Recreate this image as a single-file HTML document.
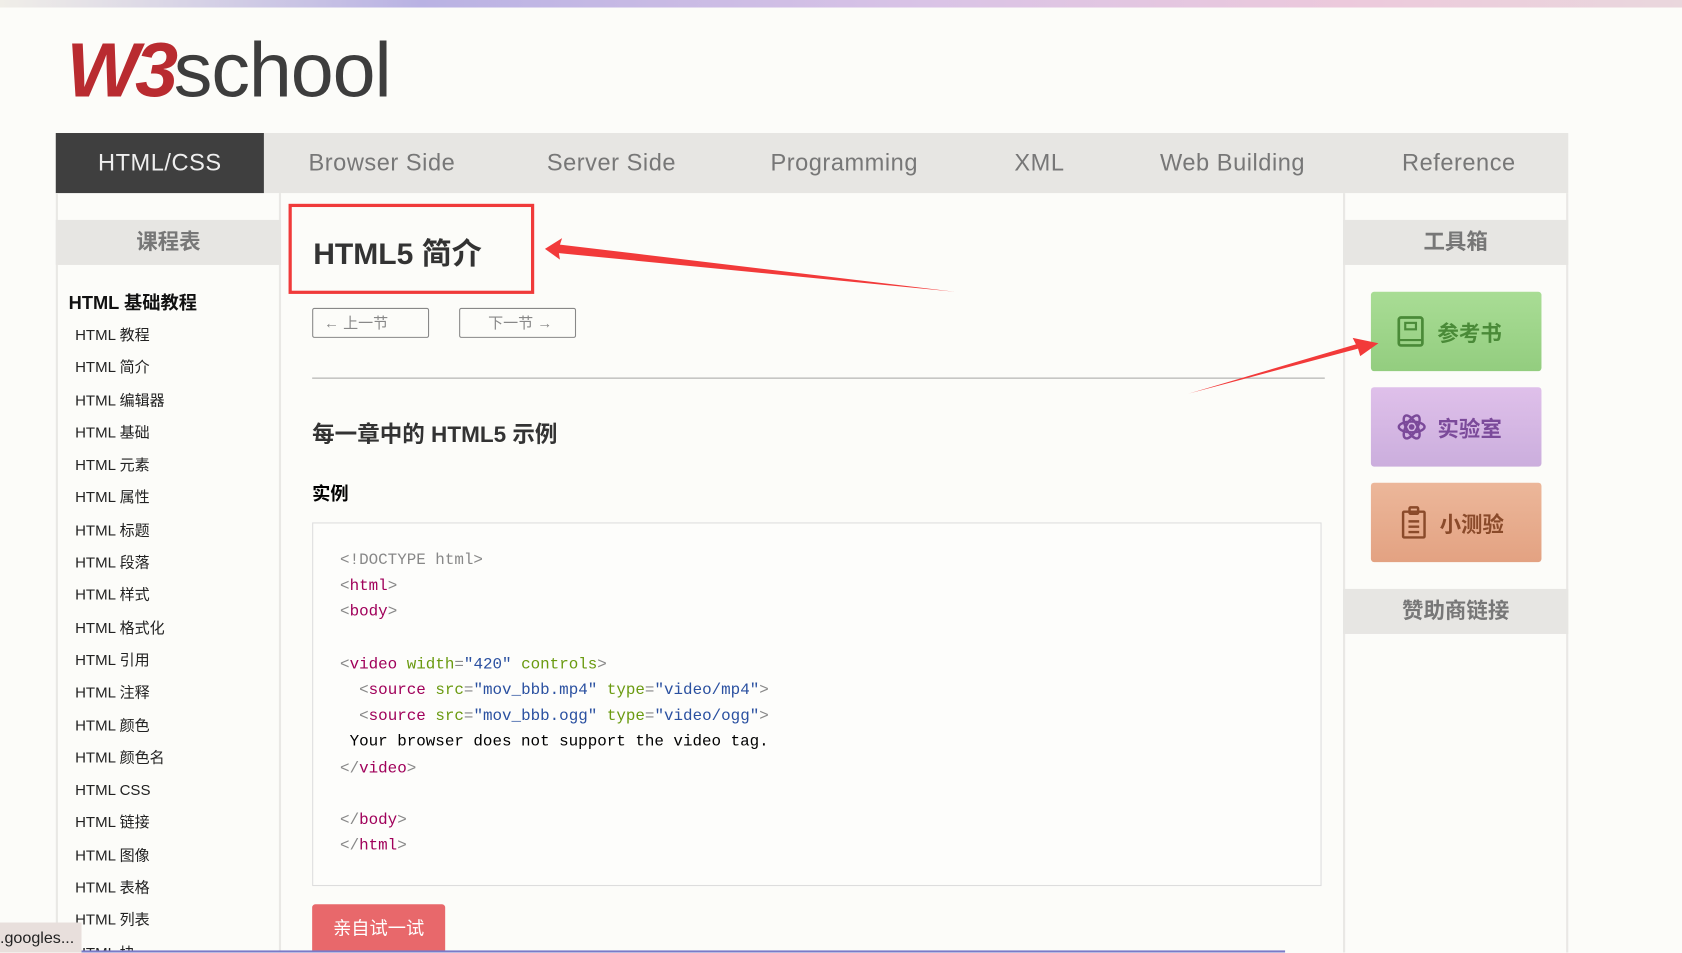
<!DOCTYPE html>
<html><head><meta charset="utf-8"><style>
*{margin:0;padding:0;box-sizing:border-box}
html,body{width:1682px;height:953px;overflow:hidden;background:#fcfcf9}
#w{position:absolute;left:0;top:0;width:1568px;height:888px;overflow:hidden;transform:scale(1.07270);transform-origin:0 0;font-family:"Liberation Sans","Noto Sans CJK SC",sans-serif;color:#333}
.a{position:absolute}
.top{left:0;top:0;width:1568px;height:7px;background:linear-gradient(90deg,#f0eee8,#b9b2e3 25%,#d9c3e6 55%,#ecc9dc 80%,#ead7dd)}
.nav{left:52px;top:124px;width:1410px;height:56px;background:#e7e6e3}
.nav span{position:absolute;top:0;line-height:56px;font-size:22px;color:#777;transform:translateX(-50%);white-space:nowrap;letter-spacing:.5px}
.act{left:52px;top:124px;width:194px;height:56px;background:#3f3f3f;color:#eee;font-size:22px;line-height:56px;text-align:center;letter-spacing:.5px}
.side{border-left:2px solid #e9e8e5;border-right:2px solid #e9e8e5}
.hd{background:#e7e6e3;color:#777;font-size:20px;text-align:center;font-weight:bold}
.li{left:70px;font-size:14px;color:#222}
.code{font-family:"Liberation Mono","DejaVu Sans Mono",monospace;font-size:14.8px;line-height:24.2px;white-space:pre;color:#000}
.g{color:#888}.t{color:#a0005a}.n{color:#6a9a10}.v{color:#2a50a0}
.btn{border-radius:3px;color:#555;font-size:20px;font-weight:bold;display:flex;align-items:center;padding-left:24px}
</style></head><body><div id="w">
<div class="a top"></div>
<div class="a" style="left:62px;top:26px;font-size:72px;font-weight:bold;letter-spacing:-4px;line-height:80px;font-family:'Liberation Sans',sans-serif"><span style="color:#b92b30;font-style:italic">W3</span><span style="color:#3d3d3d;font-weight:normal;letter-spacing:-1px">school</span></div>
<div class="a nav">
<span style="left:304px">Browser Side</span><span style="left:518px">Server Side</span><span style="left:735px">Programming</span><span style="left:917px">XML</span><span style="left:1097px">Web Building</span><span style="left:1308px">Reference</span></div>
<div class="a act">HTML/CSS</div>

<div class="a side" style="left:52px;top:180px;width:210px;height:708px"></div>
<div class="a hd" style="left:52px;top:205px;width:210px;height:42px;line-height:42px">课程表</div>
<div class="a" style="left:64px;top:268px;font-size:17px;font-weight:bold;color:#111">HTML 基础教程</div>
<div class="a li" style="top:297px;line-height:30.3px">HTML 教程<br>HTML 简介<br>HTML 编辑器<br>HTML 基础<br>HTML 元素<br>HTML 属性<br>HTML 标题<br>HTML 段落<br>HTML 样式<br>HTML 格式化<br>HTML 引用<br>HTML 注释<br>HTML 颜色<br>HTML 颜色名<br>HTML CSS<br>HTML 链接<br>HTML 图像<br>HTML 表格<br>HTML 列表<br>HTML 块</div>

<div class="a" style="left:269px;top:190px;width:229px;height:84px;border:3px solid #f03a3a"></div>
<div class="a" style="left:292px;top:215px;font-size:28px;font-weight:bold;color:#333">HTML5 简介</div>
<div class="a" style="left:291px;top:287px;width:109px;height:28px;border:1px solid #888;border-radius:2px;font-size:14px;color:#888;line-height:26px;padding-left:10px">← 上一节</div>
<div class="a" style="left:428px;top:287px;width:109px;height:28px;border:1px solid #888;border-radius:2px;font-size:14px;color:#888;line-height:26px;padding-left:26px">下一节 →</div>
<div class="a" style="left:291px;top:352px;width:944px;height:1px;background:#aaa"></div>
<div class="a" style="left:291px;top:389px;font-size:21px;font-weight:bold;color:#333">每一章中的 HTML5 示例</div>
<div class="a" style="left:291px;top:446px;font-size:17px;font-weight:bold;color:#000">实例</div>
<div class="a" style="left:291px;top:487px;width:941px;height:339px;border:1px solid #ddd;background:#fdfdfb"></div>
<div class="a code" style="left:317px;top:511px"><span class="g">&lt;!DOCTYPE html&gt;</span>
<span class="g">&lt;</span><span class="t">html</span><span class="g">&gt;</span>
<span class="g">&lt;</span><span class="t">body</span><span class="g">&gt;</span>

<span class="g">&lt;</span><span class="t">video</span> <span class="n">width</span><span class="g">=</span><span class="v">"420"</span> <span class="n">controls</span><span class="g">&gt;</span>
  <span class="g">&lt;</span><span class="t">source</span> <span class="n">src</span><span class="g">=</span><span class="v">"mov_bbb.mp4"</span> <span class="n">type</span><span class="g">=</span><span class="v">"video/mp4"</span><span class="g">&gt;</span>
  <span class="g">&lt;</span><span class="t">source</span> <span class="n">src</span><span class="g">=</span><span class="v">"mov_bbb.ogg"</span> <span class="n">type</span><span class="g">=</span><span class="v">"video/ogg"</span><span class="g">&gt;</span>
 Your browser does not support the video tag.
<span class="g">&lt;/</span><span class="t">video</span><span class="g">&gt;</span>

<span class="g">&lt;/</span><span class="t">body</span><span class="g">&gt;</span>
<span class="g">&lt;/</span><span class="t">html</span><span class="g">&gt;</span></div>
<div class="a" style="left:291px;top:843px;width:124px;height:45px;background:#e8686b;border-radius:3px 3px 0 0;color:#fff;font-size:17px;text-align:center;line-height:45px">亲自试一试</div>

<div class="a side" style="left:1252px;top:180px;width:210px;height:708px"></div>
<div class="a hd" style="left:1252px;top:205px;width:210px;height:42px;line-height:42px">工具箱</div>
<div class="a btn" style="left:1278px;top:272px;width:159px;height:74px;background:linear-gradient(#a9dd95,#93cd7f);color:#4a8a38">
<svg width="26" height="30" viewBox="0 0 26 30" style="margin-right:12px"><rect x="2" y="2" width="22" height="26" rx="2" fill="none" stroke="#4a8a38" stroke-width="2.5"/><rect x="8" y="7" width="10" height="6" fill="none" stroke="#4a8a38" stroke-width="2"/><line x1="2" y1="23" x2="24" y2="23" stroke="#4a8a38" stroke-width="2"/></svg>参考书</div>
<div class="a btn" style="left:1278px;top:361px;width:159px;height:74px;background:linear-gradient(#dfc0ea,#cbaedd);color:#7b4a9a">
<svg width="28" height="30" viewBox="0 0 28 30" style="margin-right:10px" fill="none" stroke="#7b4a9a" stroke-width="2.3"><ellipse cx="14" cy="15" rx="12" ry="5"/><ellipse cx="14" cy="15" rx="12" ry="5" transform="rotate(60 14 15)"/><ellipse cx="14" cy="15" rx="12" ry="5" transform="rotate(-60 14 15)"/><circle cx="14" cy="15" r="1.5" fill="#7b4a9a"/></svg>实验室</div>
<div class="a btn" style="left:1278px;top:450px;width:159px;height:74px;background:linear-gradient(#ecb79a,#e3a282);color:#8a4a2a">
<svg width="24" height="32" viewBox="0 0 24 32" style="margin-right:12px;margin-left:4px" fill="none" stroke="#8a4a2a" stroke-width="2.3"><rect x="2" y="6" width="20" height="24" rx="1"/><rect x="8" y="2" width="8" height="6" rx="1"/><line x1="7" y1="15" x2="17" y2="15"/><line x1="7" y1="20" x2="17" y2="20"/><line x1="7" y1="25" x2="17" y2="25"/></svg>小测验</div>
<div class="a hd" style="left:1252px;top:549px;width:210px;height:42px;line-height:42px">赞助商链接</div>

<svg class="a" style="left:0;top:0" width="1568" height="888">
<polygon points="508,232 524,222 522,228 890,272 521,236 522,242" fill="#f23a3a"/>
<polygon points="1108,367 1264,321 1261,315 1285,320 1268,332 1266,325" fill="#f23a3a"/>
</svg>
<div class="a" style="left:0;top:860px;width:76px;height:28px;background:#e8dfdc;font-size:15px;color:#222;line-height:30px">.googles...</div>
<div class="a" style="left:76px;top:886px;width:1122px;height:2px;background:#7a7ac8"></div>
</div></body></html>
